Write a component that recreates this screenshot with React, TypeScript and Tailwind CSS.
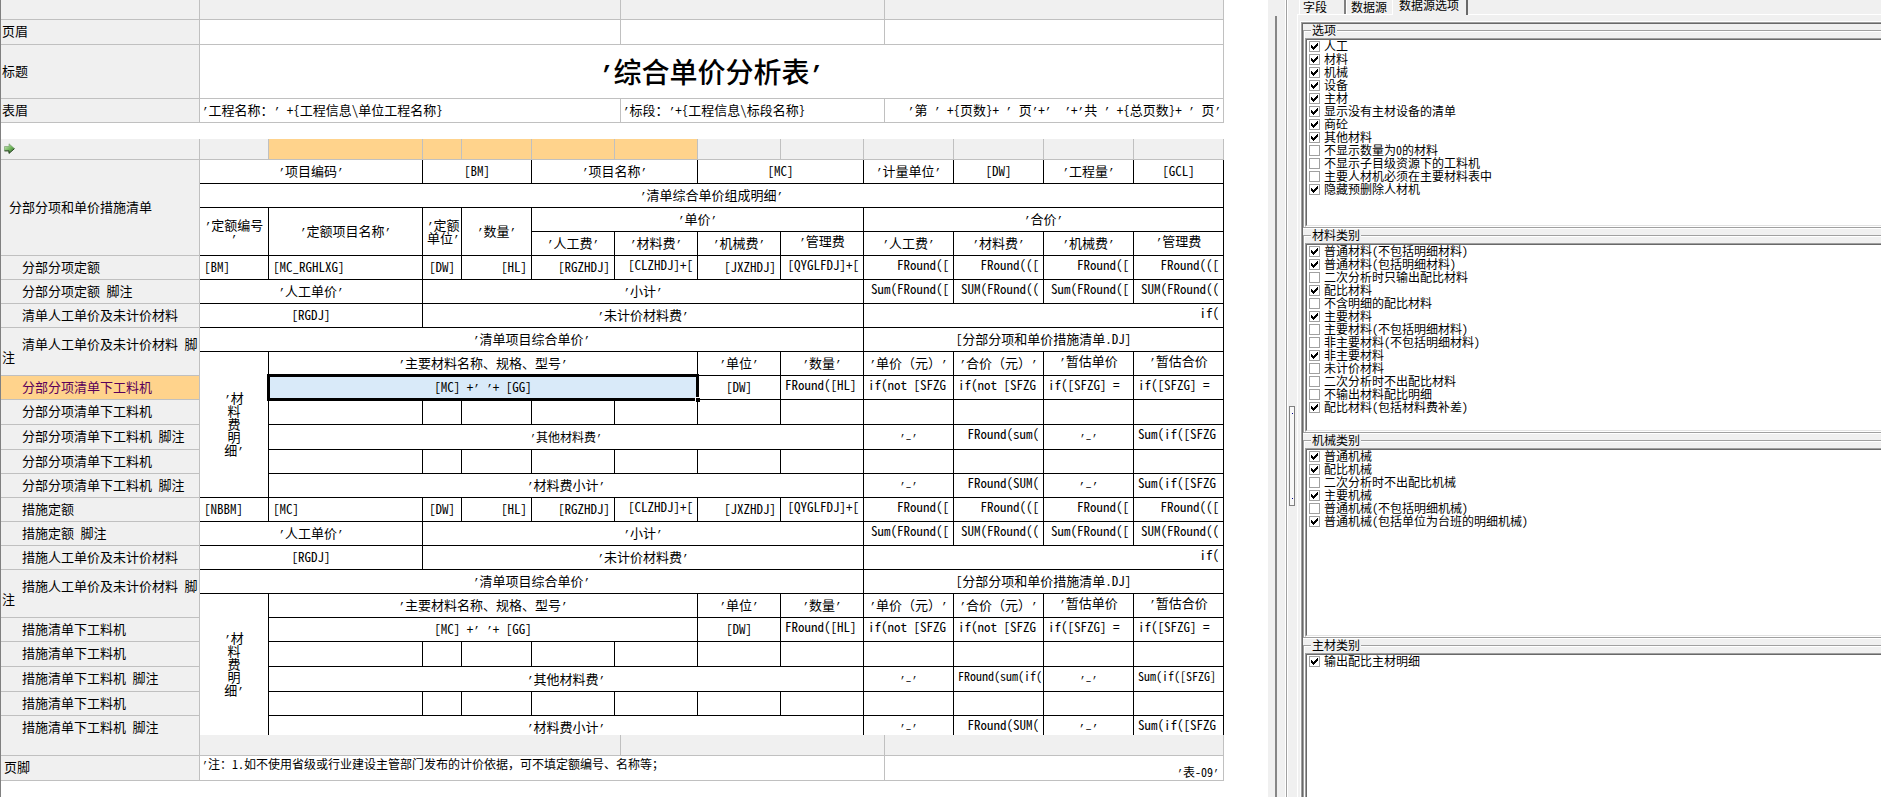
import { Fragment, useState } from "react";
import clsx from "clsx";

type Align = "l" | "c" | "r";

interface Cell {
  t?: string;
  span?: number;
  rows?: number;
  align?: Align;
  top?: boolean;
  small?: boolean;
  selected?: boolean;
}

interface Label {
  t: string;
  rows?: number;
  shallow?: boolean;
  selected?: boolean;
}

interface Row {
  h: string;
  label?: Label;
  cells: Cell[];
  last?: boolean;
}

const H24 = "h-[24px]";
const H25 = "h-[25px]";
const H19 = "h-[19px]";

/** Quote marks are half as wide as the ideographs, like the rest of the ASCII text. */
function Mixed({ text, small }: { text: string; small?: boolean }) {
  return (
    <>
      {text.split(/([’–]+)/).map((run, i) =>
        i % 2 === 1 ? (
          <span
            key={i}
            className={clsx(
              "font-['Liberation_Mono','Noto_Sans_CJK_SC',monospace] leading-[0px]",
              small ? "text-[10px]" : "text-[11px]",
            )}
          >
            {run}
          </span>
        ) : (
          <Fragment key={i}>{run}</Fragment>
        ),
      )}
    </>
  );
}

const priceRow = (code: string, name: string): Cell[] => [
  { t: code, align: "l" },
  { t: name, align: "l" },
  { t: "[DW]" },
  { t: "[HL]", align: "r" },
  { t: "[RGZHDJ]", align: "r" },
  { t: "[CLZHDJ]+[", align: "r", top: true },
  { t: "[JXZHDJ]", align: "r" },
  { t: "[QYGLFDJ]+[", align: "r", top: true },
  { t: "FRound([", align: "r", top: true },
  { t: "FRound(([", align: "r", top: true },
  { t: "FRound([", align: "r", top: true },
  { t: "FRound(([", align: "r", top: true },
];

const subtotalRow: Cell[] = [
  { t: "’人工单价’", span: 2 },
  { t: "’小计’", span: 6 },
  { t: "Sum(FRound([", align: "r", top: true },
  { t: "SUM(FRound((", align: "r", top: true },
  { t: "Sum(FRound([", align: "r", top: true },
  { t: "SUM(FRound((", align: "r", top: true },
];

const unpricedRow: Cell[] = [
  { t: "[RGDJ]", span: 2 },
  { t: "’未计价材料费’", span: 6 },
  { t: "if(", span: 4, align: "r", top: true },
];

const unitPriceRow: Cell[] = [
  { t: "’清单项目综合单价’", span: 8 },
  { t: "[分部分项和单价措施清单.DJ]", span: 4 },
];

const materialHead: Cell[] = [
  { t: "’材\n料\n费\n明\n细’", rows: 6 },
  { t: "’主要材料名称、规格、型号’", span: 5 },
  { t: "’单位’" },
  { t: "’数量’" },
  { t: "’单价（元）’" },
  { t: "’合价（元）’" },
  { t: "’暂估单价", top: true },
  { t: "’暂估合价", top: true },
];

const materialRow = (selected: boolean): Cell[] => [
  { t: "[MC] +’ ’+ [GG]", span: 5, selected },
  { t: "[DW]" },
  { t: "FRound([HL]", top: true, align: "l" },
  { t: "if(not [SFZG", top: true, align: "l" },
  { t: "if(not [SFZG", top: true, align: "l" },
  { t: "if([SFZG] =", top: true, align: "l" },
  { t: "if([SFZG] =", top: true, align: "l" },
];

const emptyRow: Cell[] = Array.from({ length: 11 }, () => ({}));

const dash: Cell = { t: "’–’", small: true };

const materialTotal: Cell[] = [
  { t: "’材料费小计’", span: 7 },
  dash,
  { t: "FRound(SUM(", align: "r", top: true },
  { t: "’–’" },
  { t: "Sum(if([SFZG", align: "l", top: true },
];

const BODY: Row[] = [
  {
    h: H24,
    label: { t: "分部分项和单价措施清单", rows: 4, shallow: true },
    cells: [
      { t: "’项目编码’", span: 2 },
      { t: "[BM]", span: 2 },
      { t: "’项目名称’", span: 2 },
      { t: "[MC]", span: 2 },
      { t: "’计量单位’" },
      { t: "[DW]" },
      { t: "’工程量’" },
      { t: "[GCL]" },
    ],
  },
  { h: H24, cells: [{ t: "’清单综合单价组成明细’", span: 12 }] },
  {
    h: H24,
    cells: [
      { t: "’定额编号\n’", rows: 2 },
      { t: "’定额项目名称’", rows: 2 },
      { t: "’定额\n单位’", rows: 2 },
      { t: "’数量’", rows: 2 },
      { t: "’单价’", span: 4 },
      { t: "’合价’", span: 4 },
    ],
  },
  {
    h: H24,
    cells: [
      { t: "’人工费’" },
      { t: "’材料费’" },
      { t: "’机械费’" },
      { t: "’管理费", top: true },
      { t: "’人工费’" },
      { t: "’材料费’" },
      { t: "’机械费’" },
      { t: "’管理费", top: true },
    ],
  },
  { h: H24, label: { t: "分部分项定额" }, cells: priceRow("[BM]", "[MC_RGHLXG]") },
  { h: H24, label: { t: "分部分项定额 脚注" }, cells: subtotalRow },
  { h: H24, label: { t: "清单人工单价及未计价材料" }, cells: unpricedRow },
  { h: H24, label: { t: "清单人工单价及未计价材料 脚注", rows: 2 }, cells: unitPriceRow },
  { h: H24, cells: materialHead },
  { h: H24, label: { t: "分部分项清单下工料机", selected: true }, cells: materialRow(true) },
  { h: H25, label: { t: "分部分项清单下工料机" }, cells: emptyRow },
  {
    h: H25,
    label: { t: "分部分项清单下工料机 脚注" },
    cells: [
      { t: "’其他材料费’", span: 7, small: true },
      dash,
      { t: "FRound(sum(", align: "r", top: true },
      dash,
      { t: "Sum(if([SFZG", align: "l", top: true },
    ],
  },
  { h: H24, label: { t: "分部分项清单下工料机" }, cells: emptyRow },
  { h: H24, label: { t: "分部分项清单下工料机 脚注" }, cells: materialTotal },
  { h: H24, label: { t: "措施定额" }, cells: priceRow("[NBBM]", "[MC]") },
  { h: H24, label: { t: "措施定额 脚注" }, cells: subtotalRow },
  { h: H24, label: { t: "措施人工单价及未计价材料" }, cells: unpricedRow },
  { h: H24, label: { t: "措施人工单价及未计价材料 脚注", rows: 2 }, cells: unitPriceRow },
  { h: H24, cells: materialHead },
  { h: H24, label: { t: "措施清单下工料机" }, cells: materialRow(false) },
  { h: H25, label: { t: "措施清单下工料机" }, cells: emptyRow },
  {
    h: H25,
    label: { t: "措施清单下工料机 脚注" },
    cells: [
      { t: "’其他材料费’", span: 7 },
      dash,
      { t: "FRound(sum(if(", align: "r", top: true, small: true },
      dash,
      { t: "Sum(if([SFZG]", align: "l", top: true, small: true },
    ],
  },
  { h: H24, label: { t: "措施清单下工料机" }, cells: emptyRow },
  { h: H19, last: true, label: { t: "措施清单下工料机 脚注" }, cells: materialTotal },
];

const TABLE = "table-fixed border-separate border-spacing-0 text-[13px] leading-[13px]";
const GRAY = "border-[#c0c0c0]";
const LABEL = "border-r border-[#c0c0c0] text-left font-normal";

function LabelCell({ label, last }: { label: Label; last?: boolean }) {
  return (
    <th
      scope="row"
      rowSpan={label.rows}
      className={clsx(
        LABEL,
        last ? "pb-[2px] align-bottom" : "border-b pb-[3px] align-middle",
        label.shallow ? "pl-2" : "pl-px indent-5",
        label.selected ? "bg-[#ffd38c] text-[#5a005a]" : "bg-[#f0f0f0]",
      )}
    >
      <Mixed text={label.t} />
    </th>
  );
}

function BodyCell({ cell, last, open }: { cell: Cell; last?: boolean; open?: boolean }) {
  const align = cell.align ?? "c";
  return (
    <td
      colSpan={cell.span}
      rowSpan={cell.rows}
      className={clsx(
        "border-r border-black px-1 whitespace-pre",
        !last && !open && "border-b",
        cell.top ? "pt-[2px] align-top" : last ? "pb-[2px] align-bottom" : "pb-[2px] align-middle",
        align === "l" ? "text-left" : align === "r" ? "text-right" : "text-center",
        cell.small && "text-[12px]",
        cell.selected && "relative bg-[#d9eaf9]",
      )}
    >
      {cell.t && <Mixed text={cell.t} small={cell.small} />}
      {cell.selected && (
        <>
          <span className="pointer-events-none absolute -top-[2px] -right-[2px] -bottom-[2px] -left-[2px] border-[3px] border-black" />
          <span className="absolute -right-[3px] -bottom-[3px] size-[5px] border-t border-l border-white bg-black" />
        </>
      )}
    </td>
  );
}

function OuterCols() {
  return (
    <colgroup>
      <col className="w-[199px]" />
      <col className="w-[421px]" />
      <col className="w-[264px]" />
      <col className="w-[339px]" />
    </colgroup>
  );
}

function OuterBand({ height }: { height: string }) {
  return (
    <tr className={height}>
      {[0, 1, 2, 3].map((i) => (
        <td key={i} className={clsx("border-r border-b bg-[#f0f0f0]", GRAY)} />
      ))}
    </tr>
  );
}

function ArrowIcon() {
  return (
    <svg width="11" height="11" viewBox="0 0 11 11" aria-hidden="true" className="ml-[3px] block">
      <defs>
        <linearGradient id="arrow" x1="0" y1="0" x2="1" y2="1">
          <stop offset="0" stopColor="#d6efc4" />
          <stop offset="0.55" stopColor="#6fb45a" />
          <stop offset="1" stopColor="#1f5a1c" />
        </linearGradient>
      </defs>
      <path d="M0.5 3.5H5V0.8L10.3 5.5L5 10.2V7.6H0.5Z" fill="url(#arrow)" stroke="#6f9a66" strokeWidth="0.6" />
      <path d="M0.5 7.9H5V10.4L10.5 5.6" fill="none" stroke="#16350f" strokeWidth="0.9" />
    </svg>
  );
}

function Sheet() {
  return (
    <main className="min-w-0 overflow-hidden border-l border-[#808080] bg-white">
      <table className={clsx(TABLE, "w-[1223px]")}>
        <OuterCols />
        <tbody>
          <OuterBand height="h-[20px]" />
          <tr className="h-[25px]">
            <th scope="row" className={clsx(LABEL, "border-b bg-[#f0f0f0] pb-[3px] pl-px")}>页眉</th>
            <td className={clsx("border-r border-b", GRAY)} />
            <td className={clsx("border-r border-b", GRAY)} />
            <td className={clsx("border-r border-b", GRAY)} />
          </tr>
          <tr className="h-[54px]">
            <th scope="row" className={clsx(LABEL, "border-b bg-[#f0f0f0] pb-[3px] pl-px")}>标题</th>
            <td colSpan={3} className={clsx("border-r border-b pb-[2px] text-center", GRAY)}>
              <h1 className="font-['Noto_Sans_CJK_SC',sans-serif] text-[28px] leading-[32px] font-medium">
                <span className="font-['Liberation_Mono',monospace] text-[23px] leading-[0px] font-bold">’</span>
                综合单价分析表
                <span className="font-['Liberation_Mono',monospace] text-[23px] leading-[0px] font-bold">’</span>
              </h1>
            </td>
          </tr>
          <tr className="h-[24px]">
            <th scope="row" className={clsx(LABEL, "border-b bg-[#f0f0f0] pb-[3px] pl-px")}>表眉</th>
            <td className={clsx("border-r border-b px-[2px] pb-[3px] whitespace-pre", GRAY)}>
              <Mixed text="’工程名称：’ +{工程信息\单位工程名称}" />
            </td>
            <td className={clsx("border-r border-b px-[2px] pb-[3px] whitespace-pre", GRAY)}>
              <Mixed text="’标段：’+{工程信息\标段名称}" />
            </td>
            <td className={clsx("border-r border-b px-[2px] pb-[3px] text-right whitespace-pre", GRAY)}>
              <Mixed text="’第 ’ +{页数}+ ’ 页’+’  ’+’共 ’ +{总页数}+ ’ 页’" />
            </td>
          </tr>
        </tbody>
      </table>

      <table className={clsx(TABLE, "mt-4 w-[1223px]")}>
        <colgroup>
          <col className="w-[199px]" />
          <col className="w-[69px]" />
          <col className="w-[154px]" />
          <col className="w-[39px]" />
          <col className="w-[70px]" />
          <col className="w-[83px]" />
          <col className="w-[83px]" />
          <col className="w-[83px]" />
          <col className="w-[83px]" />
          <col className="w-[90px]" />
          <col className="w-[90px]" />
          <col className="w-[90px]" />
          <col className="w-[90px]" />
        </colgroup>
        <tbody>
          <tr className="h-[21px]">
            {Array.from({ length: 13 }, (_, i) => (
              <td
                key={i}
                className={clsx(
                  "border-r border-b",
                  GRAY,
                  i === 0 && "pb-[2px]",
                  i >= 2 && i <= 6 ? "bg-[#ffd38c]" : "bg-[#f0f0f0]",
                )}
              >
                {i === 0 && <ArrowIcon />}
              </td>
            ))}
          </tr>
          {BODY.map((row, i) => (
            <tr key={i} className={row.h}>
              {row.label && <LabelCell label={row.label} last={row.last} />}
              {row.cells.map((cell, j) => (
                <BodyCell
                  key={j}
                  cell={cell}
                  last={row.last}
                  open={cell.rows !== undefined && i + cell.rows === BODY.length}
                />
              ))}
            </tr>
          ))}
        </tbody>
      </table>

      <table className={clsx(TABLE, "w-[1223px]")}>
        <OuterCols />
        <tbody>
          <OuterBand height="h-[21px]" />
          <tr className="h-[25px]">
            <th scope="row" className={clsx(LABEL, "border-b bg-[#f0f0f0] pb-[3px] pl-[3px]")}>页脚</th>
            <td colSpan={2} className={clsx("border-r border-b px-[2px] pt-px align-top text-[12px] whitespace-pre", GRAY)}>
              <Mixed small text="’注：1.如不使用省级或行业建设主管部门发布的计价依据，可不填定额编号、名称等；" />
            </td>
            <td className={clsx("border-r border-b px-1 pb-[2px] text-right align-bottom text-[12px] whitespace-pre", GRAY)}>
              <Mixed small text="’表-09’" />
            </td>
          </tr>
        </tbody>
      </table>
    </main>
  );
}

type Option = [text: string, checked: boolean];

const GROUPS: { title: string; options: Option[] }[] = [
  {
    title: "选项",
    options: [
      ["人工", true],
      ["材料", true],
      ["机械", true],
      ["设备", true],
      ["主材", true],
      ["显示没有主材设备的清单", true],
      ["商砼", true],
      ["其他材料", true],
      ["不显示数量为0的材料", false],
      ["不显示子目级资源下的工料机", false],
      ["主要人材机必须在主要材料表中", false],
      ["隐藏预删除人材机", true],
    ],
  },
  {
    title: "材料类别",
    options: [
      ["普通材料(不包括明细材料)", true],
      ["普通材料(包括明细材料)", true],
      ["二次分析时只输出配比材料", false],
      ["配比材料", true],
      ["不含明细的配比材料", false],
      ["主要材料", true],
      ["主要材料(不包括明细材料)", false],
      ["非主要材料(不包括明细材料)", false],
      ["非主要材料", true],
      ["未计价材料", false],
      ["二次分析时不出配比材料", false],
      ["不输出材料配比明细", false],
      ["配比材料(包括材料费补差)", true],
    ],
  },
  {
    title: "机械类别",
    options: [
      ["普通机械", true],
      ["配比机械", true],
      ["二次分析时不出配比机械", false],
      ["主要机械", true],
      ["普通机械(不包括明细机械)", false],
      ["普通机械(包括单位为台班的明细机械)", true],
    ],
  },
  { title: "主材类别", options: [["输出配比主材明细", true]] },
];

function CheckItem({ text, initial }: { text: string; initial: boolean }) {
  const [checked, setChecked] = useState(initial);
  return (
    <label className="flex h-[13px] items-center whitespace-nowrap">
      <span className="relative flex size-[11px]">
        <input
          type="checkbox"
          checked={checked}
          onChange={(e) => setChecked(e.target.checked)}
          className="size-[11px] appearance-none border border-[#a0a0a0] bg-white"
        />
        {checked && (
          <svg
            viewBox="0 0 7 7"
            shapeRendering="crispEdges"
            aria-hidden="true"
            className="pointer-events-none absolute top-[2px] left-[2px] size-[7px]"
          >
            <path d="M0 2h1v1h1v1h1v-1h1v-1h1v-1h1v-1h1v3h-1v1h-1v1h-1v1h-1v1h-1v-1h-1v-1h-1z" fill="#000" />
          </svg>
        )}
      </span>
      <span className="ml-1 self-start leading-[11px]">{text}</span>
    </label>
  );
}

function Group({ title, options }: { title: string; options: Option[] }) {
  return (
    <fieldset className="mb-px min-w-0 border border-r-0 border-[#a0a0a0] pl-px shadow-[0_1px_0_#fff,inset_1px_1px_0_#fff]">
      <legend className="ml-[6px] h-[12px] bg-[#f0f0f0] px-px leading-[12px]">{title}</legend>
      <div className="mt-[2px] border-t border-b border-l border-t-[#a0a0a0] border-b-white border-l-[#a0a0a0]">
        <div className="h-[187px] border-t border-b border-l border-t-[#696969] border-b-[#e3e3e3] border-l-[#696969] bg-white pl-[2px]">
          {options.map(([text, on]) => (
            <CheckItem key={text} text={text} initial={on} />
          ))}
        </div>
      </div>
    </fieldset>
  );
}

function OptionsPane() {
  return (
    <aside className="flex min-w-0 overflow-hidden bg-[#f0f0f0] text-[12px] leading-[13px]">
      <div className="w-[7px] shrink-0" />
      <div className="mt-4 w-[2px] shrink-0 bg-[#868686]" />
      <div className="w-2 shrink-0" />
      <div className="w-[3px] shrink-0 border-x border-white bg-[#a0a0a0]" />
      <div className="w-[9px] shrink-0 pt-[406px] pl-px">
        <div className="flex h-[100px] w-[6px] flex-col items-center justify-between border border-[#808080] bg-[#f8f8f8] py-[6px]">
          <span className="size-px bg-[#00008b]" />
          <span className="size-px bg-[#00008b]" />
        </div>
      </div>
      <div className="min-w-0 flex-1">
        <div role="tablist" className="flex h-[14px] pl-[2px]">
          <button
            role="tab"
            aria-selected="false"
            className="flex h-[14px] w-[47px] items-start border-r-2 border-l border-r-[#808080] border-l-white pl-[3px] text-left"
          >
            字段
          </button>
          <button
            role="tab"
            aria-selected="false"
            className="flex h-[14px] w-[46px] items-start border-l border-white pl-1 text-left"
          >
            数据源
          </button>
          <button
            role="tab"
            aria-selected="true"
            className="relative z-10 -mt-[2px] flex h-[17px] w-[76px] items-start border-r-2 border-l border-r-[#696969] border-l-white bg-[#f0f0f0] pl-[6px] text-left"
          >
            数据源选项
          </button>
        </div>
        <div className="border-t border-l border-white pt-[6px] pl-[2px]">
          <div className="border-t border-l border-white">
            <div className="border-t border-l border-[#a0a0a0]">
              <div className="border-t border-l border-[#696969]">
                {GROUPS.map((g) => (
                  <Group key={g.title} title={g.title} options={g.options} />
                ))}
              </div>
            </div>
          </div>
        </div>
      </div>
    </aside>
  );
}

export default function App() {
  return (
    <div className="grid h-screen grid-cols-[1268px_minmax(0,1fr)] grid-rows-1 overflow-hidden bg-white font-['Noto_Sans_Mono_CJK_SC','Noto_Sans_CJK_SC',sans-serif] text-black [text-spacing-trim:space-all]">
      <Sheet />
      <OptionsPane />
    </div>
  );
}
